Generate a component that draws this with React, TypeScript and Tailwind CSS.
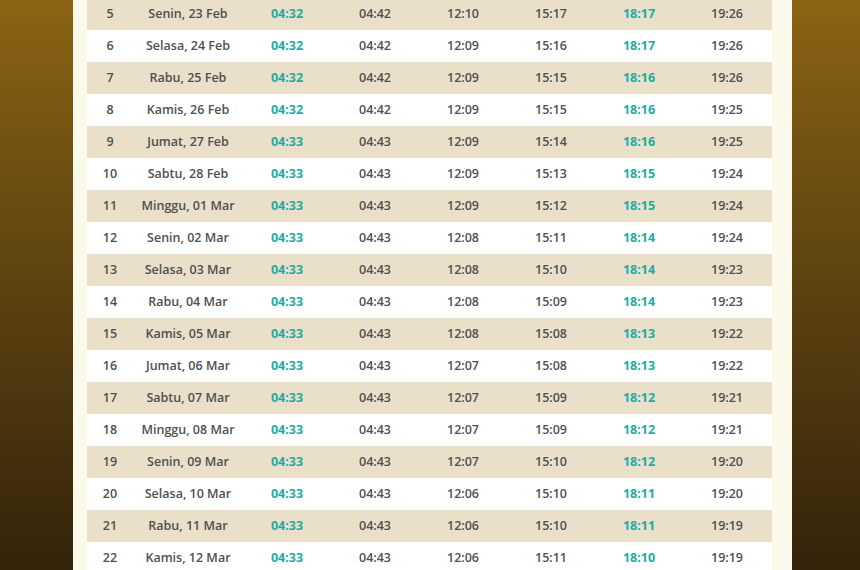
const rows: [number, string, string, string, string, string, string, string][] = [
  [5, 'Senin, 23 Feb', '04:32', '04:42', '12:10', '15:17', '18:17', '19:26'],
  [6, 'Selasa, 24 Feb', '04:32', '04:42', '12:09', '15:16', '18:17', '19:26'],
  [7, 'Rabu, 25 Feb', '04:32', '04:42', '12:09', '15:15', '18:16', '19:26'],
  [8, 'Kamis, 26 Feb', '04:32', '04:42', '12:09', '15:15', '18:16', '19:25'],
  [9, 'Jumat, 27 Feb', '04:33', '04:43', '12:09', '15:14', '18:16', '19:25'],
  [10, 'Sabtu, 28 Feb', '04:33', '04:43', '12:09', '15:13', '18:15', '19:24'],
  [11, 'Minggu, 01 Mar', '04:33', '04:43', '12:09', '15:12', '18:15', '19:24'],
  [12, 'Senin, 02 Mar', '04:33', '04:43', '12:08', '15:11', '18:14', '19:24'],
  [13, 'Selasa, 03 Mar', '04:33', '04:43', '12:08', '15:10', '18:14', '19:23'],
  [14, 'Rabu, 04 Mar', '04:33', '04:43', '12:08', '15:09', '18:14', '19:23'],
  [15, 'Kamis, 05 Mar', '04:33', '04:43', '12:08', '15:08', '18:13', '19:22'],
  [16, 'Jumat, 06 Mar', '04:33', '04:43', '12:07', '15:08', '18:13', '19:22'],
  [17, 'Sabtu, 07 Mar', '04:33', '04:43', '12:07', '15:09', '18:12', '19:21'],
  [18, 'Minggu, 08 Mar', '04:33', '04:43', '12:07', '15:09', '18:12', '19:21'],
  [19, 'Senin, 09 Mar', '04:33', '04:43', '12:07', '15:10', '18:12', '19:20'],
  [20, 'Selasa, 10 Mar', '04:33', '04:43', '12:06', '15:10', '18:11', '19:20'],
  [21, 'Rabu, 11 Mar', '04:33', '04:43', '12:06', '15:10', '18:11', '19:19'],
  [22, 'Kamis, 12 Mar', '04:33', '04:43', '12:06', '15:11', '18:10', '19:19'],
];

export default function App() {
  return (
    <div
      className="h-[570px] w-[860px] overflow-hidden bg-gradient-to-b from-[#8b6413] to-[#33240a] pl-[73px]"
      style={{ fontFamily: '"Open Sans", "Noto Sans", sans-serif' }}
    >
      <div className="flex h-full w-[719px] flex-col overflow-hidden bg-[#fbf9ea] pl-[14px]">
        <div className="-mt-[2px] w-[685px]">
          {rows.map(([no, date, imsak, subuh, dzuhur, ashar, maghrib, isya], i) => (
            <div
              key={no}
              className={`grid h-[32px] grid-cols-[46px_110px_repeat(6,88px)] items-center text-center text-[12.5px] font-[560] text-[#505050] ${
                i % 2 === 0 ? 'bg-[#eadfc8]' : 'bg-white'
              }`}
            >
              <span>{no}</span>
              <span>{date}</span>
              <span className="font-bold text-[#1eaca3]">{imsak}</span>
              <span>{subuh}</span>
              <span>{dzuhur}</span>
              <span>{ashar}</span>
              <span className="font-bold text-[#1eaca3]">{maghrib}</span>
              <span>{isya}</span>
            </div>
          ))}
        </div>
      </div>
    </div>
  );
}
